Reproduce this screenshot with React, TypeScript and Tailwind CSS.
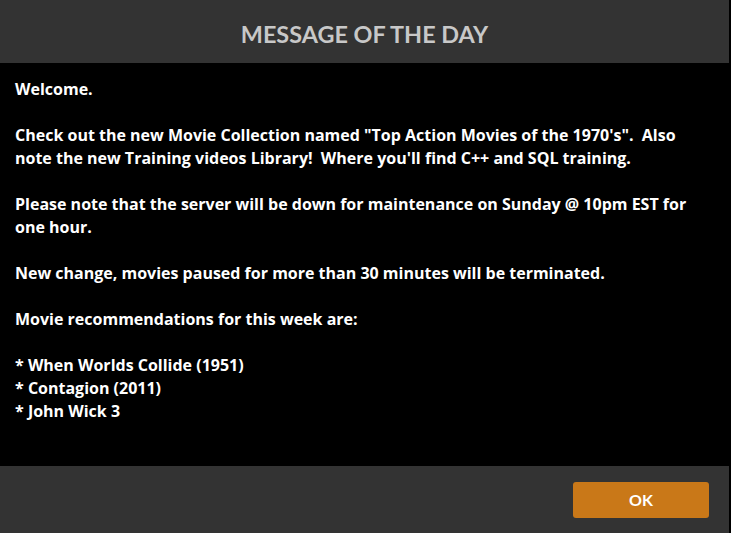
import React from "react";

const lines = [
  "Welcome.",
  "",
  "Check out the new Movie Collection named \"Top Action Movies of the 1970's\".  Also",
  "note the new Training videos Library!  Where you'll find C++ and SQL training.",
  "",
  "Please note that the server will be down for maintenance on Sunday @ 10pm EST for",
  "one hour.",
  "",
  "New change, movies paused for more than 30 minutes will be terminated.",
  "",
  "Movie recommendations for this week are:",
  "",
  "* When Worlds Collide (1951)",
  "* Contagion (2011)",
  "* John Wick 3",
];

export default function App() {
  return (
    <div className="w-[731px] h-[533px] bg-black flex overflow-hidden" style={{ fontFamily: "'Open Sans', Lato, sans-serif" }}>
      <div className="w-[729px] h-full flex flex-col">
        <div className="h-[63px] bg-[#333333] flex items-center justify-center shrink-0 pt-[6px]">
          <span className="text-[23.4px] font-bold text-[#c8c8c8]" style={{ fontFamily: "Lato, sans-serif" }}>MESSAGE OF THE DAY</span>
        </div>
        <div className="flex-1 bg-black pl-[15px] pt-[15px]">
          <div className="text-white font-bold text-[16px] leading-[23px] whitespace-pre">
            {lines.map((l, i) => (
              <div key={i} className="h-[23px]">{l}</div>
            ))}
          </div>
        </div>
        <div className="h-[67px] bg-[#333333] flex items-center justify-end pr-[20px] shrink-0">
          <button className="w-[136px] h-[36px] bg-[#c97818] rounded-[3px] text-white font-bold text-[16px] pt-[1px]" style={{ fontFamily: "Lato, sans-serif" }}>OK</button>
        </div>
      </div>
    </div>
  );
}
